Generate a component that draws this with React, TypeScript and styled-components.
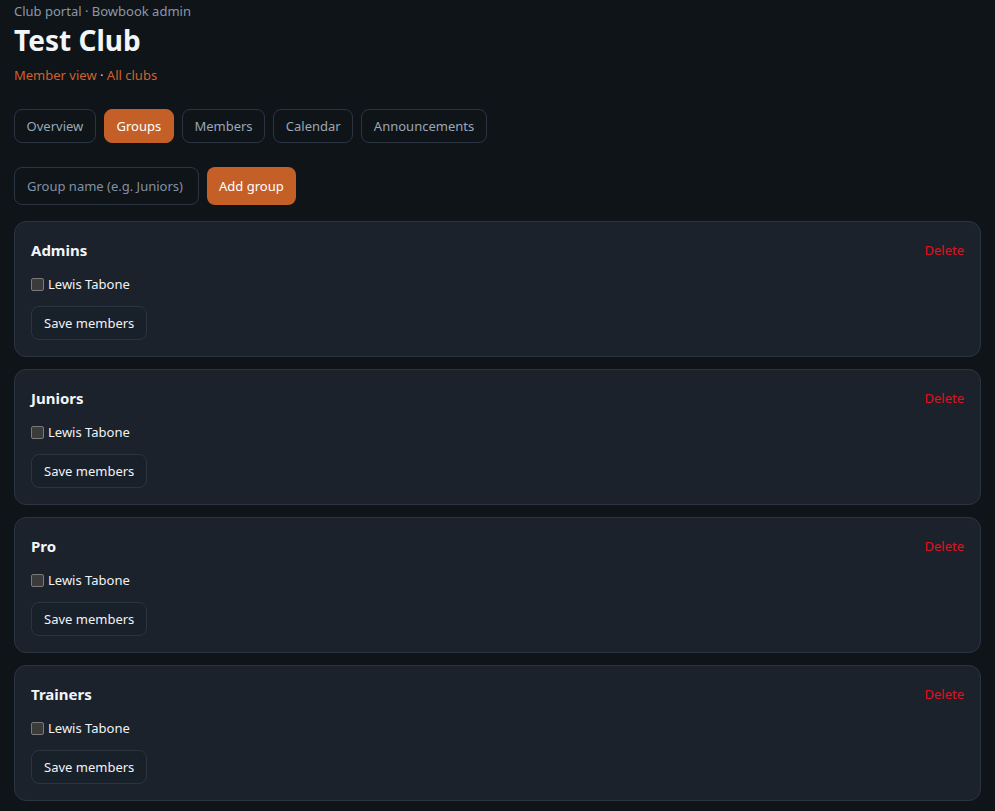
import React from "react";
import styled, { createGlobalStyle } from "styled-components";

const Global = createGlobalStyle`
  html, body { margin: 0; padding: 0; background: #0f1419; color-scheme: dark; }
  body { font-family: "Noto Sans", "Open Sans", sans-serif; color: #e6edf3; }
  * { box-sizing: border-box; }
`;

const Page = styled.div`
  padding: 2px 14px 10px 14px;
  display: flex;
  flex-direction: column;
`;

const Eyebrow = styled.div`
  font-size: 13px;
  color: #8b98a8;
  line-height: 18px;
`;

const Title = styled.h1`
  margin: 2px 0 0 0;
  font-size: 28px;
  line-height: 36px;
  font-weight: 700;
  color: #f3f6f9;
`;

const Links = styled.div`
  margin-top: 8px;
  font-size: 13px;
  line-height: 18px;
  color: #c9d1d9;
`;

const Link = styled.a`
  color: #d0612a;
  text-decoration: none;
`;

const Tabs = styled.nav`
  display: flex;
  gap: 8px;
  margin-top: 25px;
`;

const Tab = styled.button<{ $active?: boolean }>`
  height: 34px;
  padding: 0 11.6px;
  border-radius: 8px;
  font-family: inherit;
  font-size: 13px;
  border: 1px solid ${(p) => (p.$active ? "#c55f28" : "#2b3441")};
  background: ${(p) => (p.$active ? "#c55f28" : "transparent")};
  color: ${(p) => (p.$active ? "#ffffff" : "#9aa7b6")};
`;

const AddRow = styled.div`
  display: flex;
  gap: 8px;
  margin-top: 24px;
`;

const Input = styled.input`
  width: 185px;
  height: 38px;
  padding: 0 12px;
  border-radius: 8px;
  border: 1px solid #2b3441;
  background: transparent;
  color: #e6edf3;
  font-family: inherit;
  font-size: 13px;
  &::placeholder { color: #8391a1; }
`;

const PrimaryButton = styled.button`
  height: 38px;
  padding: 0 12px;
  border-radius: 8px;
  border: none;
  background: #c55f28;
  color: #ffffff;
  font-family: inherit;
  font-size: 13px;
`;

const List = styled.div`
  display: flex;
  flex-direction: column;
  gap: 12px;
  margin-top: 16px;
`;

const Card = styled.section`
  background: #1b222c;
  border: 1px solid #2b3441;
  border-radius: 12px;
  padding: 16px 16px 16px 16px;
  display: flex;
  flex-direction: column;
`;

const CardHead = styled.div`
  display: flex;
  justify-content: space-between;
  align-items: center;
  height: 24px;
`;

const CardTitle = styled.h3`
  margin: 0;
  font-size: 15px;
  font-weight: 700;
  color: #f3f6f9;
`;

const DeleteLink = styled.button`
  background: none;
  border: none;
  padding: 0;
  color: #e0121e;
  font-family: inherit;
  font-size: 13px;
`;

const MemberRow = styled.label`
  display: flex;
  align-items: center;
  gap: 4px;
  margin-top: 13px;
  font-size: 13px;
  line-height: 18px;
  color: #f0f3f6;
`;

const Check = styled.input`
  appearance: none;
  margin: 0;
  width: 13px;
  height: 13px;
  border-radius: 2px;
  border: 1px solid #7a7a7a;
  background: #3b3b3b;
`;

const SecondaryButton = styled.button`
  align-self: flex-start;
  margin-top: 13px;
  height: 34px;
  padding: 0 12px;
  border-radius: 8px;
  border: 1px solid #2b3441;
  background: #18202a;
  color: #f0f3f6;
  font-family: inherit;
  font-size: 13px;
`;

const groups = ["Admins", "Juniors", "Pro", "Trainers"];
const tabs = ["Overview", "Groups", "Members", "Calendar", "Announcements"];

export default function App() {
  return (
    <>
      <Global />
      <Page>
        <Eyebrow>Club portal · Bowbook admin</Eyebrow>
        <Title>Test Club</Title>
        <Links>
          <Link href="#">Member view</Link> · <Link href="#">All clubs</Link>
        </Links>
        <Tabs>
          {tabs.map((t) => (
            <Tab key={t} $active={t === "Groups"}>
              {t}
            </Tab>
          ))}
        </Tabs>
        <AddRow>
          <Input placeholder="Group name (e.g. Juniors)" />
          <PrimaryButton>Add group</PrimaryButton>
        </AddRow>
        <List>
          {groups.map((g) => (
            <Card key={g}>
              <CardHead>
                <CardTitle>{g}</CardTitle>
                <DeleteLink>Delete</DeleteLink>
              </CardHead>
              <MemberRow>
                <Check type="checkbox" />
                Lewis Tabone
              </MemberRow>
              <SecondaryButton>Save members</SecondaryButton>
            </Card>
          ))}
        </List>
      </Page>
    </>
  );
}
